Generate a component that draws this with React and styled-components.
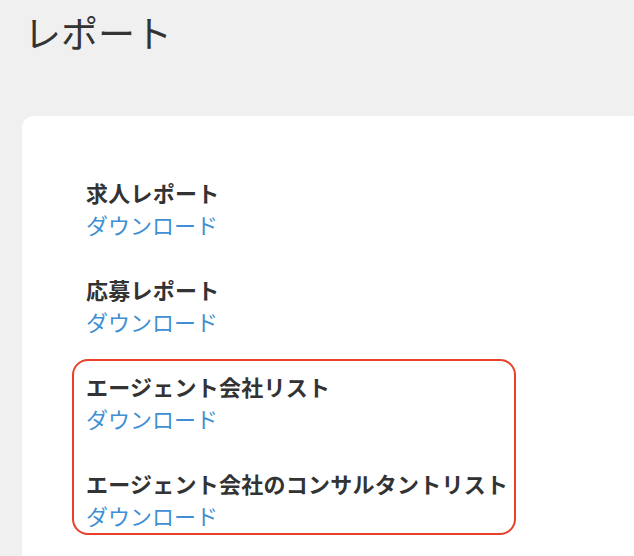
import React from "react";
import styled, { createGlobalStyle } from "styled-components";

const GlobalStyle = createGlobalStyle`
  html, body {
    margin: 0;
    padding: 0;
    background: #f0f0f0;
    overflow: hidden;
  }
  body {
    font-family: "Noto Sans CJK JP", "Noto Sans", sans-serif;
    color: #333;
  }
`;

const Page = styled.div`
  min-height: 556px;
  padding: 0 0 0 22px;
`;

const Title = styled.h1`
  margin: 0;
  padding: 8px 0 0 2px;
  height: 116px;
  box-sizing: border-box;
  font-size: 37px;
  font-weight: 400;
  line-height: 48px;
  color: #333;
`;

const Card = styled.section`
  background: #fff;
  border-radius: 12px 0 0 0;
  margin-right: -40px;
  min-height: 440px;
  padding: 60px 0 0 64px;
  box-sizing: border-box;
`;

const List = styled.div`
  display: flex;
  flex-direction: column;
  gap: 33px;
`;

const Item = styled.div`
  display: flex;
  flex-direction: column;
`;

const Label = styled.div`
  font-size: 22px;
  font-weight: 700;
  line-height: 32px;
  letter-spacing: 0.25px;
  color: #333;
`;

const Link = styled.a`
  font-size: 22px;
  line-height: 32px;
  color: #3f8fd2;
  text-decoration: none;
  cursor: pointer;
`;

const Highlight = styled.div`
  display: flex;
  flex-direction: column;
  gap: 33px;
  width: fit-content;
  margin: -11px 0 -4px -14px;
  padding: 9px 6px 2px 12px;
  border: 2px solid #e8402a;
  border-radius: 16px;
`;

const reports = ["求人レポート", "応募レポート"];
const agentReports = ["エージェント会社リスト", "エージェント会社のコンサルタントリスト"];

const ReportItem = ({ name }) => (
  <Item>
    <Label>{name}</Label>
    <Link>ダウンロード</Link>
  </Item>
);

export default function App() {
  return (
    <>
      <GlobalStyle />
      <Page>
        <Title>レポート</Title>
        <Card>
          <List>
            {reports.map((r) => (
              <ReportItem key={r} name={r} />
            ))}
            <Highlight>
              {agentReports.map((r) => (
                <ReportItem key={r} name={r} />
              ))}
            </Highlight>
          </List>
        </Card>
      </Page>
    </>
  );
}
